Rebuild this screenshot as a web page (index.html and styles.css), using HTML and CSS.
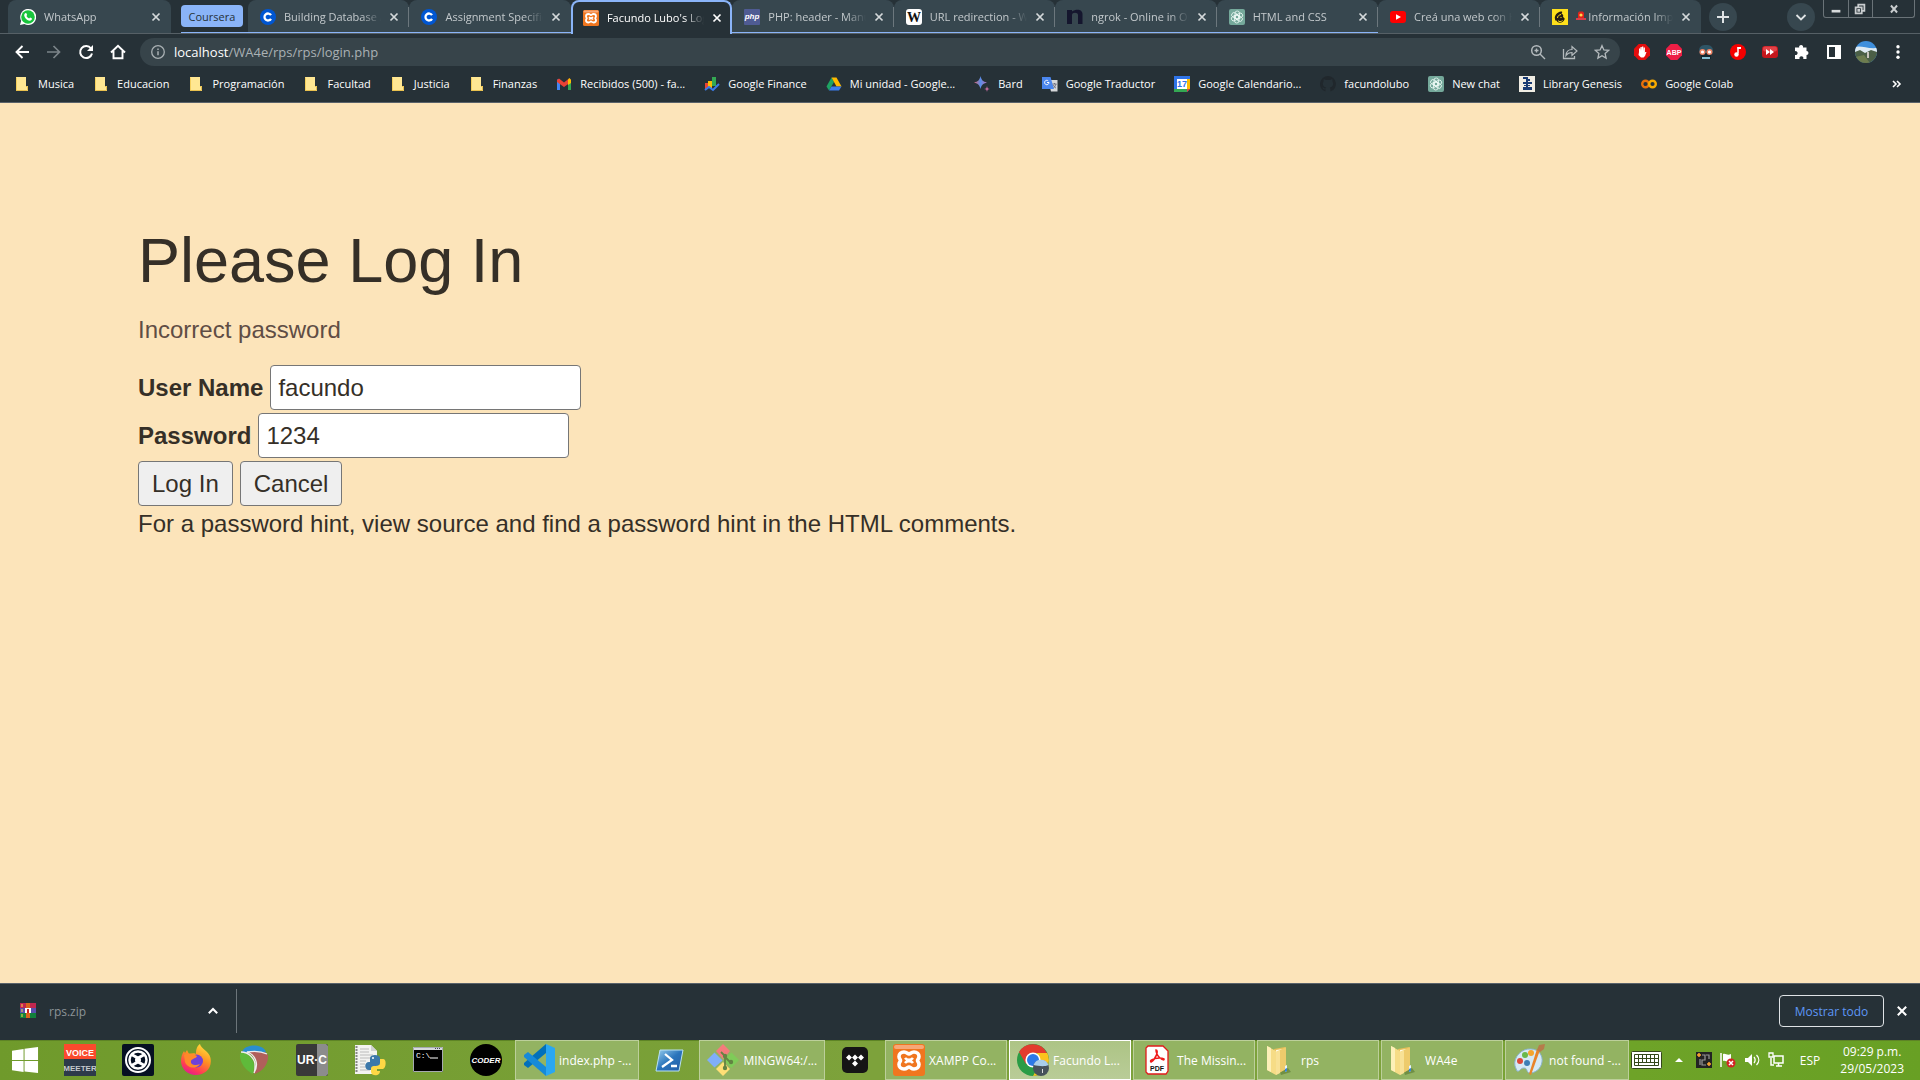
FILE: index.html
```html
<!DOCTYPE html>
<html lang="es">
<head>
<meta charset="utf-8">
<title>Facundo Lubo's Login Page</title>
<link rel="stylesheet" href="styles.css">
</head>
<body>
<svg class="defs" aria-hidden="true">
  <symbol id="x" viewBox="0 0 10 10"><path d="M1.5 1.5l7 7m0-7l-7 7" fill="none" stroke="currentColor" stroke-width="1.7"/></symbol>
  <symbol id="coursera" viewBox="0 0 16 16"><circle cx="8" cy="8" r="8" fill="#0056d2"/><path d="M11 6.2A3.5 3.5 0 1 0 11 9.8" fill="none" stroke="#fff" stroke-width="2.3"/></symbol>
  <symbol id="xampp" viewBox="0 0 32 32"><rect width="32" height="32" rx="3" fill="#f0761f"/><rect x="1" y="1" width="30" height="4" rx="2" fill="#f7a878"/><path d="M11 8c3 0 3.500 2 5 2s2-2 5-2c3 0 5 2 5 4.500s-1.500 2.500-1.500 4 1.500 1.500 1.500 4-2 4.500-5 4.500-3.500-2-5-2-2 2-5 2-5-2-5-4.500 1.500-2.500 1.500-4S6 15 6 12.500 8 8 11 8z" fill="none" stroke="#fff" stroke-width="3.600"/><path d="M12 14c2 2.500 6 2.500 8 0M12 19c2-2.500 6-2.500 8 0" fill="none" stroke="#fff" stroke-width="2.600"/></symbol>
  <symbol id="gpt" viewBox="0 0 16 16"><rect width="16" height="16" rx="2" fill="#75a99b"/><g fill="none" stroke="#eefaf6" stroke-width=".8"><rect x="6" y="2" width="4.500" height="8" rx="2.200"/><rect x="6" y="2" width="4.500" height="8" rx="2.200" transform="rotate(60 8 8)"/><rect x="6" y="2" width="4.500" height="8" rx="2.200" transform="rotate(120 8 8)"/><rect x="6" y="2" width="4.500" height="8" rx="2.200" transform="rotate(180 8 8)"/><rect x="6" y="2" width="4.500" height="8" rx="2.200" transform="rotate(240 8 8)"/><rect x="6" y="2" width="4.500" height="8" rx="2.200" transform="rotate(300 8 8)"/></g></symbol>
  <symbol id="folder" viewBox="0 0 16 16"><path d="M2 1h10v9h2v5H2z" fill="#ffe793"/><path d="M2.500 15V1.500" stroke="#f5cf5c"/><path d="M2 14.500h11.500v-4H12" fill="none" stroke="#e9c14e"/></symbol>
  <symbol id="bigfolder" viewBox="0 0 32 32"><path d="M16 31l10-3-3-4-8 4z" fill="#3b5a1a" opacity=".4"/><path d="M9 5l11-2v22l-9 3z" fill="#e7bf5a"/><path d="M11 6l7-1v21l-6 2z" fill="#fffbe5"/><path d="M2 2l9 5v24L2 26z" fill="#f6dc86"/><path d="M2 2l4 2v24l-4-2z" fill="#fdf0b8"/><path d="M11 8l10-5v22l-10 6z" fill="#eecb6c"/><path d="M11 8l4-2v23l-4 2z" fill="#f8e196"/><path d="M20 22l2-1v6l-2 1z" fill="#e8f4ff"/><path d="M20 25l2-1v3l-2 1z" fill="#3585d8"/></symbol>
</svg>

<header class="browser">
  <div class="strip">
    <div class="tab tab-first"><svg class="ico" viewBox="0 0 16 16"><path d="M0 16l1.200-4.200A8 8 0 1 1 4.400 15z" fill="#fff"/><circle cx="8" cy="8" r="6.800" fill="#18c43c"/><path d="M5 4.200l1.200-.2 1 2-.8 1c.6 1.200 1.500 2 2.700 2.600l1-1 1.900 1c0 1.600-1.200 2.200-2.300 2.100C6.500 11.200 4 8 4.200 5.700z" fill="#fff"/></svg><span class="title">WhatsApp</span><button class="close" aria-label="Cerrar"><svg><use href="#x"/></svg></button></div>
    <div class="chip-wrap"><button class="chip">Coursera</button></div>
    <div class="tabs">
      <div class="tab grouped sep"><svg class="ico"><use href="#coursera"/></svg><span class="title">Building Database Applications</span><button class="close" aria-label="Cerrar"><svg><use href="#x"/></svg></button></div>
      <div class="tab grouped"><svg class="ico"><use href="#coursera"/></svg><span class="title">Assignment Specification</span><button class="close" aria-label="Cerrar"><svg><use href="#x"/></svg></button></div>
      <div class="tab active"><svg class="ico"><use href="#xampp"/></svg><span class="title">Facundo Lubo's Login Page</span><button class="close" aria-label="Cerrar"><svg><use href="#x"/></svg></button></div>
      <div class="tab grouped sep"><svg class="ico" viewBox="0 0 16 16"><rect width="16" height="16" rx="1" fill="#4f5b93"/><text x="8" y="10" class="t-php">php</text></svg><span class="title">PHP: header - Manual</span><button class="close" aria-label="Cerrar"><svg><use href="#x"/></svg></button></div>
      <div class="tab grouped sep"><svg class="ico" viewBox="0 0 16 16"><rect width="16" height="16" rx="3" fill="#fff"/><text x="8" y="13" class="t-wiki">W</text></svg><span class="title">URL redirection - Wikipedia</span><button class="close" aria-label="Cerrar"><svg><use href="#x"/></svg></button></div>
      <div class="tab grouped sep"><svg class="ico" viewBox="0 0 16 16"><path d="M0 1h5v1.500C9-.5 15.500 0 15.500 5v10H11V6c0-3-6-3-6 0v9H0z" fill="#15162e"/></svg><span class="title">ngrok - Online in One Line</span><button class="close" aria-label="Cerrar"><svg><use href="#x"/></svg></button></div>
      <div class="tab grouped sep"><svg class="ico"><use href="#gpt"/></svg><span class="title">HTML and CSS</span><button class="close" aria-label="Cerrar"><svg><use href="#x"/></svg></button></div>
      <div class="tab sep"><svg class="ico" viewBox="0 0 16 16"><rect y="2" width="16" height="12" rx="3" fill="#f00"/><path d="M6 5.200l5 2.800-5 2.800z" fill="#fff"/></svg><span class="title">Creá una web con HTML</span><button class="close" aria-label="Cerrar"><svg><use href="#x"/></svg></button></div>
      <div class="tab"><svg class="ico" viewBox="0 0 16 16"><rect width="16" height="16" fill="#ffe01b"/><path d="M3 10c-1-3 2-7 6-7.500 2-.2 1 1.500.500 2.500 2 0 2 2 1.500 3 1 .5 2 1 1.500 2.500C11.500 14 6 15 4.500 11.500 3.500 12 3 11 3 10z" fill="#241c15"/><path d="M5.500 9c0-2 1.500-3 3.500-3.500M6 11.500c1 1.500 3 1.500 4.500 0M8.500 8.500h1" fill="none" stroke="#ffe01b"/></svg><span class="title"><svg class="siren" viewBox="0 0 10 10"><path d="M2 7V2l1-1.500h4L8 2v5z" fill="#e2231a"/><circle cx="5" cy="4" r="1.600" fill="#ffd84d"/><path d="M0 7h10v2H0z" fill="#d8404a"/></svg> Información Importante</span><button class="close" aria-label="Cerrar"><svg><use href="#x"/></svg></button></div>
    </div>
    <button class="round" aria-label="Nueva pestaña"><svg viewBox="0 0 28 28"><path d="M14 8v12M8 14h12" stroke="#dfe3e5" stroke-width="2"/></svg></button>
    <button class="round search" aria-label="Buscar pestañas"><svg viewBox="0 0 28 28"><path d="M9.500 12l4.500 4.500 4.500-4.500" fill="none" stroke="#dfe3e5" stroke-width="1.800"/></svg></button>
    <div class="win">
      <button aria-label="Minimizar"><svg viewBox="0 0 16 16"><rect x="3" y="9" width="10" height="3" fill="#d7dadb"/></svg></button>
      <button aria-label="Restaurar"><svg viewBox="0 0 16 16"><path d="M6 5V3h7v7h-2M3 6h7v7H3zM6 9h1v1H6z" fill="none" stroke="#c9cdcf" stroke-width="2"/></svg></button>
      <button class="win-x" aria-label="Cerrar ventana"><svg viewBox="0 0 16 16"><path d="M4.500 4l7 8m0-8l-7 8" stroke="#c9cdcf" stroke-width="2.200"/></svg></button>
    </div>
  </div>

  <nav class="toolbar">
    <button class="tool" aria-label="Atrás"><svg viewBox="0 0 16 16"><path d="M15 8H2.500M8.500 2L2.500 8l6 6" fill="none" stroke="#fff" stroke-width="1.900"/></svg></button>
    <button class="tool" aria-label="Adelante"><svg viewBox="0 0 16 16"><path d="M1 8h12.500M7.500 2l6 6-6 6" fill="none" stroke="#7b8489" stroke-width="1.700"/></svg></button>
    <button class="tool" aria-label="Recargar"><svg viewBox="0 0 16 16"><path d="M13 4.500A6 6 0 1 0 14 9.500" fill="none" stroke="#fff" stroke-width="2"/><path d="M15 1v6H9z" fill="#fff"/></svg></button>
    <button class="tool" aria-label="Inicio"><svg viewBox="0 0 16 16"><path d="M1 8.500L8 1.800l7 6.700M3.500 7v7.200h9V7" fill="none" stroke="#fff" stroke-width="1.900"/></svg></button>
    <div class="address">
      <svg class="ico" viewBox="0 0 16 16"><circle cx="8" cy="8" r="6.300" fill="none" stroke="#a9b0b3" stroke-width="1.300"/><path d="M8 7.200v4M8 4.400v1.500" stroke="#a9b0b3" stroke-width="1.500"/></svg>
      <span class="url"><b>localhost</b>/WA4e/rps/rps/login.php</span>
      <button class="tool" aria-label="Zoom"><svg viewBox="0 0 16 16"><circle cx="6.500" cy="6.500" r="4.800" fill="none" stroke="#b4babd" stroke-width="1.500"/><path d="M10 10l5 5M6.500 4.500v4M4.500 6.500h4" stroke="#b4babd" stroke-width="1.400"/></svg></button>
      <button class="tool" aria-label="Compartir"><svg viewBox="0 0 16 16"><path d="M1.500 5v9.500h11V12" fill="none" stroke="#b4babd" stroke-width="1.300"/><path d="M4 11.500c.3-4 2.500-6 6-6V2.500L15 7l-5 4.500V8.500c-2.500 0-4.500.8-6 3z" fill="none" stroke="#b4babd" stroke-width="1.200"/></svg></button>
      <button class="tool" aria-label="Favorito"><svg viewBox="0 0 16 16"><path d="M8 1.700l1.900 4.300 4.700.4-3.500 3.100 1 4.600L8 11.700l-4.100 2.400 1-4.600L1.400 6.400l4.700-.4z" fill="none" stroke="#b4babd" stroke-width="1.300"/></svg></button>
    </div>
    <div class="exts">
      <button class="tool" aria-label="AdBlock"><svg viewBox="0 0 16 16"><path d="M4.700 0h6.600L16 4.700v6.600L11.300 16H4.700L0 11.300V4.700z" fill="#e40d0d"/><path d="M5 8V4.500h1.200V7l.3-4h1.300v4l.3-4.500h1.200V7l.4-3.500h1.200V9l.3-1h1.300l-1.500 4-1.500 1.500H7L4.500 11z" fill="#fff"/></svg></button>
      <button class="tool" aria-label="Adblock Plus"><svg viewBox="0 0 16 16"><path d="M4.700 0h6.600L16 4.700v6.600L11.300 16H4.700L0 11.300V4.700z" fill="#ed1e45"/><text x="8" y="10.600" class="t-abp">ABP</text></svg></button>
      <button class="tool" aria-label="Extensión"><svg viewBox="0 0 16 16"><path d="M1 7C1 2 4 1 8 1s7 1 7 6l-1 3H2z" fill="#2e5566"/><path d="M3 9h10v6H3z" fill="#13262e"/><path d="M4 13h8v2H4z" fill="#86bdd0"/><circle cx="4.500" cy="8" r="3" fill="#ef8262"/><circle cx="11.500" cy="8" r="3" fill="#ef8262"/><circle cx="4.500" cy="8" r="1.600" fill="#fff"/><circle cx="11.500" cy="8" r="1.600" fill="#fff"/></svg></button>
      <button class="tool" aria-label="Música"><svg viewBox="0 0 16 16"><circle cx="8" cy="8" r="8" fill="#f50000"/><path d="M8 3v6.500" stroke="#fff" stroke-width="1.500"/><path d="M7.500 3H11v2H7.500z" fill="#fff"/><circle cx="6.500" cy="10.500" r="2.200" fill="#fff"/></svg></button>
      <button class="tool" aria-label="Velocidad"><svg viewBox="0 0 16 16"><rect y="2" width="16" height="12" rx="3" fill="#c4161c"/><rect x="1" y="2.500" width="14" height="5" rx="2" fill="#e24247"/><path d="M4 5l4 3-4 3zM8 5l4 3-4 3z" fill="#fff"/></svg></button>
      <button class="tool" aria-label="Extensiones"><svg viewBox="0 0 16 16"><path d="M2 3.500h3.200a2 2 0 1 1 3.800 0h3.500V7a2 2 0 1 1 0 4v4H9.200a2 2 0 1 0-3.600 0H1v-4a2 2 0 1 0 0-3.800V3.500z" fill="#fff"/></svg></button>
      <button class="tool" aria-label="Panel lateral"><svg viewBox="0 0 16 16"><path d="M1 1h14v14H1zM3 3v10h6V3z" fill="#fff" fill-rule="evenodd"/></svg></button>
      <button class="tool" aria-label="Perfil"><svg class="avatar" viewBox="0 0 22 22"><defs><clipPath id="av"><circle cx="11" cy="11" r="11"/></clipPath></defs><g clip-path="url(#av)"><path d="M0 0h22v22H0z" fill="#3f8fdc"/><path d="M0 6c6-2 12 2 22 1v5H0z" fill="#dfeaf2"/><path d="M0 11l5-2 5 3 6-3 6 2v11H0z" fill="#4b5f47"/><path d="M0 16l9-2 6 8H0z" fill="#6d7c4f"/><path d="M12 11h2v6h-2z" fill="#c8c4bd"/></g></svg></button>
      <button class="tool" aria-label="Menú"><svg viewBox="0 0 16 16"><circle cx="8" cy="2.800" r="1.700" fill="#fff"/><circle cx="8" cy="8" r="1.700" fill="#fff"/><circle cx="8" cy="13.200" r="1.700" fill="#fff"/></svg></button>
    </div>
  </nav>

  <nav class="bookmarks">
    <a href="#"><svg class="ico"><use href="#folder"/></svg>Musica</a>
    <a href="#"><svg class="ico"><use href="#folder"/></svg>Educacion</a>
    <a href="#"><svg class="ico"><use href="#folder"/></svg>Programación</a>
    <a href="#"><svg class="ico"><use href="#folder"/></svg>Facultad</a>
    <a href="#"><svg class="ico"><use href="#folder"/></svg>Justicia</a>
    <a href="#"><svg class="ico"><use href="#folder"/></svg>Finanzas</a>
    <a href="#"><svg class="ico" viewBox="0 0 16 16"><path d="M1 3.500h3V14H1z" fill="#4285f4"/><path d="M12 3.500h3V14h-3z" fill="#34a853"/><path d="M1 4l2-1.500 5 4 5-4L15 4v2L8 11 1 6z" fill="#ea4335"/><path d="M12 3.500L13.500 2 15 4v3l-3 2z" fill="#fbbc04"/></svg>Recibidos (500) - fa...</a>
    <a href="#"><svg class="ico" viewBox="0 0 16 16"><path d="M1 7h3v6H1z" fill="#ea4335"/><path d="M4 5h4v7H4z" fill="#fbbc04"/><path d="M8 1h4v9H8z" fill="#34a853"/><path d="M1 14l4-3 4 3 6-6" fill="none" stroke="#3b7bea" stroke-width="2"/></svg>Google Finance</a>
    <a href="#"><svg class="ico" viewBox="0 0 16 16"><path d="M5.500 1.500L8 6l-5 8.500L.5 10.500z" fill="#1ea362"/><path d="M5.500 1.500h5l5 9h-5z" fill="#ffba00"/><path d="M3 14.500l2.500-4h10l-2.500 4z" fill="#3b7ded"/></svg>Mi unidad - Google...</a>
    <a href="#"><svg class="ico" viewBox="0 0 16 16"><defs><linearGradient id="bard"><stop stop-color="#d96570"/><stop offset=".5" stop-color="#5b8ee8"/><stop offset="1" stop-color="#b46fb8"/></linearGradient></defs><path d="M6.500 0c1 4 2.200 5.500 6.500 6.500-4.300 1-5.500 2.500-6.500 6.500C5.500 9 4.300 7.500 0 6.500 4.300 5.500 5.500 4 6.500 0z" fill="url(#bard)"/><path d="M13 10c.3 2 1 2.700 3 3-2 .3-2.700 1-3 3-.3-2-1-2.700-3-3 2-.3 2.700-1 3-3z" fill="#c06a9c"/></svg>Bard</a>
    <a href="#"><svg class="ico" viewBox="0 0 16 16"><path d="M6 4h9.500v11.500H9z" fill="#d5d7da"/><path d="M0 1h8.500L12 13H0z" fill="#4a86ee"/><path d="M7 6.500H5m2 0a2.200 2.200 0 1 1-.8-1.700" fill="none" stroke="#fff" stroke-width="1"/><path d="M10.500 8h4m-2-1v1m1.500 0c-.5 2-1.500 3-2.500 4m0-3c.5 1.500 1.500 2.500 2.500 3" fill="none" stroke="#667" stroke-width=".9"/></svg>Google Traductor</a>
    <a href="#"><svg class="ico" viewBox="0 0 16 16"><path d="M0 0h16v13l-3 3H0z" fill="#2f74e8"/><path d="M13 3h3v10h-3z" fill="#fbbc04"/><path d="M0 13h13v3H0z" fill="#34a853"/><path d="M13 13h3l-3 3z" fill="#ea4335"/><path d="M3 3h10v10H3z" fill="#fff"/><text x="8" y="11" class="t-cal">17</text></svg>Google Calendario...</a>
    <a href="#"><svg class="ico" viewBox="0 0 16 16"><path d="M8 0a8 8 0 0 0-2.500 15.600v-2.300C3 13.800 2.700 12 2.200 11.500c1.700-.5 2 1.500 3.400 1l.6-1C4 11 2.800 10 2.800 7.500L3.500 5.400l.2-2.300L6 4h4l2.300-.9.200 2.300.7 2.100c0 2.500-1.200 3.500-3.400 4l.6 1.500v2.600A8 8 0 0 0 8 0z" fill="#20272c"/></svg>facundolubo</a>
    <a href="#"><svg class="ico"><use href="#gpt"/></svg>New chat</a>
    <a href="#"><svg class="ico" viewBox="0 0 16 16"><path d="M0 0h16v16H0z" fill="#f0ede4"/><path d="M4 1h5v2H4zM7 3h4v2H7zM4 6h9v2H4zM5 9h6v1H5zM4 11h9v3H4zM7 1h2v13H7z" fill="#183a73"/></svg>Library Genesis</a>
    <a href="#"><svg class="ico" viewBox="0 0 16 16"><g fill="none" stroke-width="2.400"><circle cx="4.500" cy="8" r="3.300" stroke="#e8710a"/><circle cx="11.500" cy="8" r="3.300" stroke="#f9ab00"/></g></svg>Google Colab</a>
    <button class="more" aria-label="Más marcadores"><svg viewBox="0 0 10 8"><path d="M1 1l3 3-3 3m4-6l3 3-3 3" fill="none" stroke="#fff" stroke-width="1.600"/></svg></button>
  </nav>
</header>

<main class="page">
  <h1>Please Log In</h1>
  <p class="error">Incorrect password</p>
  <form onsubmit="return false">
    <div class="row"><label for="nam">User Name</label><input type="text" id="nam" value="facundo"></div>
    <div class="row"><label for="pass">Password</label><input type="text" id="pass" value="1234"></div>
    <div class="row"><button type="submit">Log In</button><button type="button">Cancel</button></div>
  </form>
  <p>For a password hint, view source and find a password hint in the HTML comments.</p>
</main>

<aside class="downloads">
  <div class="file">
    <svg class="ico" viewBox="0 0 16 16"><path d="M0 0h16v5H0z" fill="#c2274f"/><path d="M0 5h16v5H0z" fill="#5a4fae"/><path d="M0 10h16v5H0z" fill="#12813c"/><path d="M6 0h4v15H6z" fill="#d9641d"/><path d="M5 5h6v5H5z" fill="#fff"/><path d="M7 6h2v4H7z" fill="#c22"/><path d="M2 1v3M2 6v3M2 11v3" stroke="#ffd94a"/></svg>
    <span>rps.zip</span>
    <button aria-label="Opciones"><svg viewBox="0 0 10 8"><path d="M.8 6.200L5 2l4.200 4.200" fill="none" stroke="#fff" stroke-width="2"/></svg></button>
  </div>
  <button class="show-all">Mostrar todo</button>
  <button class="bar-close" aria-label="Cerrar"><svg><use href="#x"/></svg></button>
</aside>

<footer class="taskbar">
  <button class="start" aria-label="Inicio"><svg viewBox="0 0 28 28"><path d="M0 4l12-2v11.500H0zM13 1.800L27 0v13.500H13zM0 14.500h12V26L0 24zM13 14.500h14V27l-14-1.500z" fill="#fff"/></svg></button>
  <button class="app" aria-label="Voicemeeter"><svg viewBox="0 0 32 32"><path d="M0 0h32v15H0z" fill="#fb4a2d"/><path d="M0 15h32v17H0z" fill="#2d3a4a"/><text x="16" y="12" class="t-voice">VOICE</text><text x="16" y="27" class="t-voice dim">MEETER</text></svg></button>
  <button class="app" aria-label="Traktor"><svg viewBox="0 0 32 32"><rect width="32" height="32" rx="2" fill="#061022"/><circle cx="16" cy="16" r="12" fill="none" stroke="#fff" stroke-width="2"/><circle cx="16" cy="16" r="8.500" fill="none" stroke="#fff" stroke-width="2.500"/><path d="M9.500 10.500L16 14l6.500-3.500M9.500 21.500L16 18l6.500 3.500" fill="none" stroke="#fff" stroke-width="3"/><circle cx="16" cy="16" r="3" fill="#fff"/></svg></button>
  <button class="app" aria-label="Firefox"><svg viewBox="0 0 32 32"><defs><linearGradient id="ff" x1=".8" y1="0" x2=".3" y2="1"><stop stop-color="#ffe33e"/><stop offset=".45" stop-color="#ff9022"/><stop offset=".8" stop-color="#ff3a55"/><stop offset="1" stop-color="#e11a93"/></linearGradient></defs><path d="M20 0c1 5 9 7 10.500 14C32.500 24 25 31 16 31 7 31 1 24 1 17c0-4 1-7 3-10l1 2 2-3 2 4c3-1 6-1 7 0 0-5 1-8 4-10z" fill="url(#ff)"/><circle cx="16.500" cy="17" r="6.500" fill="#7141d9"/><path d="M4 11c5-3 9-1 13 1-1 3-5 2-6 5-1 4 5 5 9 3-4 6-13 4-15-2z" fill="#ff8a2a"/></svg></button>
  <button class="app" aria-label="REAPER"><svg viewBox="0 0 32 32"><path d="M5 6C9 0 23 0 27 6l2 5C25 7 14 8 9 8L4 8z" fill="#2a8ed0"/><path d="M2 10l2-2c7 2 12 8 12 14l-1 8C8 27 1 18 2 10z" fill="#5fba3a"/><path d="M10 8h17l3 3c1 8-5 17-14 19 5-11 0-18-6-22z" fill="#b0605b"/><path d="M3 8c8 0 14 7 14 13 0 3 0 6-1 8 6-10 0-19-7-21 6-1 14-1 20 2" fill="none" stroke="#eee" stroke-width="1.300"/></svg></button>
  <button class="app" aria-label="UR-C"><svg viewBox="0 0 32 32"><rect width="32" height="32" rx="2" fill="#393939"/><path d="M21 0h9l2 2v28l-2 2h-9z" fill="#8c8c8c"/><text x="16" y="20" class="t-urc">UR·C</text></svg></button>
  <button class="app" aria-label="Python"><svg viewBox="0 0 32 32"><path d="M1 1h16l6 6v23H1z" fill="#f3f3f1"/><path d="M2.500 2v27" stroke="#888" stroke-width="2" stroke-dasharray="2 1"/><path d="M6 5h9M6 8h9M6 11h13M6 14h13M6 17h6M6 20h5M6 23h5M6 26h10" stroke="#bbb"/><path d="M17 1v6h6z" fill="#d2d2d2"/><path d="M16 18v-4c0-4 10-4 10 0v6c0 3-7 1-8 4v2h-3c-5 0-5-8 0-8z" fill="#3c78aa"/><path d="M26 15h3c4 0 3 9 0 10h-6v2h3c0 6-9 5-9 1v-4c1-4 9 0 9-5z" fill="#ffd845"/><circle cx="19" cy="14" r="1" fill="#fff"/></svg></button>
  <button class="app" aria-label="Símbolo del sistema"><svg viewBox="0 0 32 32"><path d="M1 3h30v25H1z" fill="#000"/><path d="M1 3h30v3H1z" fill="#d7dadd"/><path d="M1.500 3.500h29v24h-29z" fill="none" stroke="#a5aab0"/><path d="M23 4.500h6" stroke="#445" stroke-dasharray="1 1"/><path d="M18 14h8" stroke="#fff"/><text x="4" y="14" class="t-cmd">C:\</text></svg></button>
  <button class="app" aria-label="Coder"><svg viewBox="0 0 32 32"><circle cx="16" cy="16" r="16" fill="#000"/><text x="16" y="19" class="t-coder">CODER</text></svg></button>
  <button class="task"><svg viewBox="0 0 32 32"><path d="M23 0l9 4v24l-9 4z" fill="#2aa7f2"/><path d="M23 0v9L5 24l-4-3v-2z" fill="#0070bb"/><path d="M1 11l4-3 18 15v9L1 13z" fill="#168ad8"/></svg><span>index.php -...</span></button>
  <button class="app wide" aria-label="PowerShell"><svg viewBox="0 0 32 32"><defs><linearGradient id="ps" x1="0" y1="0" x2="1" y2="1"><stop stop-color="#9ad0ef"/><stop offset=".5" stop-color="#2a74bb"/><stop offset="1" stop-color="#245ba4"/></linearGradient></defs><path d="M7 6h23l-4 21H3z" fill="url(#ps)" stroke="#b9e1f2"/><path d="M12 10l7 6-10 7M18 22h6" fill="none" stroke="#fff" stroke-width="2.300"/></svg></button>
  <button class="task"><svg viewBox="0 0 32 32"><path d="M16 0l7 7-7 8-7-8z" fill="#f37c7c"/><path d="M7.500 8.500l8 8-8 7L0 16z" fill="#80aefa"/><path d="M24.500 8.500L32 16l-7.500 8-8-8z" fill="#7fcb58"/><path d="M16 18l7 7-7 7-7-7z" fill="#ffdf76"/><path d="M14 8l4 4v14M18 13l5 5" fill="none" stroke="#638443" stroke-width="1.800"/><circle cx="18" cy="12" r="2.200" fill="#638443"/><circle cx="24" cy="18" r="2.200" fill="#638443"/><circle cx="18" cy="24" r="2.200" fill="#638443"/></svg><span>MINGW64:/...</span></button>
  <button class="app wide" aria-label="TIDAL"><svg viewBox="0 0 32 32"><rect x="3" y="3" width="26" height="26" rx="5" fill="#151515"/><path d="M10 10.500l3 3-3 3-3-3zM16 10.500l3 3-3 3-3-3zM22 10.500l3 3-3 3-3-3zM16 16.500l3 3-3 3-3-3z" fill="#fff"/></svg></button>
  <div class="tasks">
    <button class="task"><svg><use href="#xampp"/></svg><span>XAMPP Co...</span></button>
    <button class="task current"><svg viewBox="0 0 32 32"><circle cx="16" cy="16" r="16" fill="#2a9c46"/><path d="M2 8A16 16 0 0 1 30 9H16l-7 11z" fill="#e33b2e"/><path d="M30.300 9A16 16 0 0 1 16 32l7-12-3-11z" fill="#fcc31e"/><circle cx="16" cy="16" r="7.600" fill="#fff"/><circle cx="16" cy="16" r="6" fill="#2c79e8"/><circle cx="24" cy="24" r="8" fill="#46515a"/><path d="M16.500 21a8 8 0 0 1 15 0c-4 2-10 1-15 0z" fill="#a9cdea"/><path d="M25 25h1v4h-1z" fill="#ddd"/></svg><span>Facundo L...</span></button>
    <button class="task"><svg viewBox="0 0 32 32"><path d="M7 2h15l5 5v20l-2 3H7l-2-2V4z" fill="#fff" stroke="#e11b1b" stroke-width="1.300"/><path d="M15 6c3 0 0 9-5 12-3-3 9-5 13-3 1 3-8-2-8-9z" fill="none" stroke="#ef1a1a" stroke-width="1.500"/><text x="16" y="27" class="t-pdf">PDF</text></svg><span>The Missin...</span></button>
    <button class="task"><svg><use href="#bigfolder"/></svg><span>rps</span></button>
    <button class="task"><svg><use href="#bigfolder"/></svg><span>WA4e</span></button>
    <button class="task"><svg viewBox="0 0 32 32"><path d="M2 22C0 13 9 4 18 5c8 0 12 7 11 13-1 7-7 11-12 11-4 0-2-5-6-5s-4 4-7 3z" fill="#d5eaf6" stroke="#8bb4cf"/><circle cx="12" cy="11" r="3" fill="#69b94a"/><circle cx="18" cy="9" r="3" fill="#f5a52c"/><circle cx="7" cy="17" r="3" fill="#dc4a3a"/><circle cx="14" cy="19" r="3" fill="#3c7eb5"/><path d="M27 6l-9 25-2-1 8-25z" fill="#e8842a"/><path d="M24 6l2-5 6-1-1 5-4 3z" fill="#b67c4b"/></svg><span>not found -...</span></button>
  </div>
  <div class="tray">
    <svg class="kbd" viewBox="0 0 31 18"><rect x=".5" y=".5" width="30" height="17" rx="1" fill="#fff" stroke="#33471a"/><g fill="none" stroke="#33471a"><path d="M3.500 3.500h24v11h-24zM3.500 7.500h24M3.500 11.500h24M7.500 3.500v11M11.500 3.500v8M15.500 3.500v8M19.500 3.500v8M23.500 3.500v11"/></g></svg>
    <svg class="up" viewBox="0 0 10 6"><path d="M1 5l4-4 4 4z" fill="#fff"/></svg>
    <svg class="ico" viewBox="0 0 16 16"><path d="M0 0h16v16H0z" fill="#232323"/><path d="M6 3h3v5H6v5h4M10 3h3v4M4 7v6" fill="none" stroke="#999" stroke-width="1.200"/><path d="M1 3h4M3 1v4M11 12h4M13 10v4" stroke="#ffa733" stroke-width="1.500"/></svg>
    <svg class="ico" viewBox="0 0 16 16"><path d="M1 1v14" stroke="#fff" stroke-width="1.500"/><path d="M3 2c3-1 4 2 8 0v7c-4 2-5-1-8 0z" fill="#fff"/><circle cx="11" cy="11" r="4.500" fill="#d32323"/><path d="M9 9l4 4m0-4l-4 4" stroke="#fff" stroke-width="1.500"/></svg>
    <svg class="ico" viewBox="0 0 16 16"><path d="M1 6h3l4-4v12l-4-4H1z" fill="#fff"/><path d="M10 5c1.500 2 1.500 4 0 6M12.500 3c3 3 3 7 0 10" fill="none" stroke="#fff" stroke-width="1.300"/></svg>
    <svg class="ico" viewBox="0 0 16 16"><path d="M6 4h9v7H6zM8 14h6M10.500 11v3M3 6v7h3" fill="none" stroke="#fff" stroke-width="1.500"/><path d="M1 1h4v4H1z" fill="none" stroke="#fff" stroke-width="1.300"/></svg>
    <span class="lang">ESP</span>
    <div class="clock"><span>09:29 p.m.</span><span>29/05/2023</span></div>
  </div>
</footer>
</body>
</html>
```
FILE: styles.css
```css
* { box-sizing: border-box; }

body {
  margin: 0;
  min-height: 100vh;
  display: flex;
  flex-direction: column;
  background: #fce4ba;
  font-family: "Open Sans", "Noto Sans", sans-serif;
  font-size: 11px;
  color: #fff;
}

button {
  margin: 0;
  padding: 0;
  border: 0;
  background: none;
  color: inherit;
  font: inherit;
}

svg { display: block; flex: none; }
.defs { position: absolute; width: 0; height: 0; }
.ico { width: 16px; height: 16px; }

/* Browser frame */
.browser {
  background: #263137;
  border-bottom: 1px solid #59626a;
}

.strip {
  display: flex;
  height: 34px;
  padding-left: 8px;
  border-bottom: 1px solid #566066;
}

.tabs {
  display: flex;
  flex: 1;
  min-width: 0;
}

.tab {
  position: relative;
  display: flex;
  flex: 1 1 0;
  align-items: center;
  min-width: 0;
  height: 33px;
  padding: 0 10px 0 12px;
  background: #37474f;
  border-radius: 8px 8px 0 0;
  color: #c3c9cc;
}

.tab-first { flex: 0 0 163px; }

.title {
  flex: 1;
  min-width: 0;
  margin: 0 8px;
  overflow: hidden;
  white-space: nowrap;
  line-height: 16px;
  -webkit-mask-image: linear-gradient(to right, #000 80%, transparent);
  mask-image: linear-gradient(to right, #000 80%, transparent);
}

.siren { display: inline-block; width: 10px; height: 10px; }

.close svg { width: 10px; height: 10px; color: #d5d9db; }

.grouped { border-bottom: 1px solid #8ab4f8; padding-top: 1px; }

.sep::after {
  content: "";
  position: absolute;
  right: 0;
  top: 7px;
  height: 20px;
  border-right: 1px solid #6c777d;
}

.active {
  height: 34px;
  padding: 0 8px 0 10px;
  background: #263137;
  border: 2px solid #8ab4f8;
  border-bottom: 0;
  color: #fff;
}

.active .close svg { color: #fff; }

.chip-wrap {
  display: flex;
  align-items: center;
  height: 33px;
  margin-left: 10px;
  padding-right: 5px;
  border-bottom: 1px solid #8ab4f8;
}

.chip {
  width: 62px;
  height: 22px;
  border-radius: 4px;
  background: #8ab4f8;
  color: #263137;
}

.round {
  width: 28px;
  height: 28px;
  margin: 3px 0 0 8px;
  border-radius: 50%;
  background: #37474f;
}

.search { margin-left: 50px; }

.win {
  display: flex;
  width: 92px;
  height: 18px;
  margin: 0 5px 0 8px;
  border: 1px solid #6a7378;
  border-top: 0;
  border-radius: 0 0 3px 3px;
}

.win button {
  display: flex;
  flex: 1;
  align-items: center;
  justify-content: center;
  border-right: 1px solid #6a7378;
}

.win .win-x { flex: 0 0 41px; border-right: 0; }
.win svg { width: 14px; height: 14px; }

.toolbar {
  display: flex;
  align-items: center;
  height: 36px;
  padding: 0 6px;
}

.tool {
  display: flex;
  flex: 0 0 32px;
  align-items: center;
  justify-content: center;
  height: 28px;
}

.tool svg { width: 16px; height: 16px; }
.tool .avatar { width: 22px; height: 22px; }

.address {
  display: flex;
  flex: 1;
  align-items: center;
  height: 28px;
  margin: 0 6px;
  padding: 0 2px 0 10px;
  border-radius: 14px;
  background: #37444a;
}

.url {
  flex: 1;
  padding-left: 8px;
  font-size: 13px;
  line-height: 18px;
  color: #aab1b4;
}

.url b { font-weight: 400; color: #fff; }

.exts { display: flex; }

.bookmarks {
  display: flex;
  align-items: center;
  gap: 19px;
  height: 32px;
  padding: 0 18px 4px 14px;
}

.bookmarks a {
  display: flex;
  align-items: center;
  gap: 8px;
  color: #fff;
  line-height: 16px;
  text-decoration: none;
  white-space: nowrap;
}

.more { margin-left: auto; }
.more svg { width: 10px; height: 8px; }

/* Lettering inside icons */
.t-php, .t-wiki, .t-abp, .t-cal, .t-voice, .t-urc, .t-coder, .t-pdf {
  text-anchor: middle;
  fill: #fff;
  font-family: "Liberation Sans", sans-serif;
  font-weight: 700;
}

.t-php { font-size: 8px; font-style: italic; }
.t-wiki { font-family: "Liberation Serif", serif; font-size: 14px; fill: #111; }
.t-abp { font-size: 7px; }
.t-cal { font-size: 9px; fill: #2f74e8; }
.t-voice { font-size: 9px; }
.t-voice.dim { font-size: 8px; fill: #c5c9cd; }
.t-urc { font-size: 12px; }
.t-coder { font-size: 8px; font-style: italic; }
.t-pdf { font-size: 7px; fill: #111; }
.t-cmd { fill: #fff; font-family: "Liberation Mono", monospace; font-size: 8px; }

/* Login page */
.page {
  flex: 1;
  padding: 122px 138px 0;
  color: #352f27;
  font-family: "Liberation Sans", Arial, sans-serif;
  font-size: 24px;
  line-height: 35px;
}

.page h1 {
  margin: 0 0 17px;
  font-size: 63px;
  font-weight: 400;
  line-height: 70px;
}

.page p { margin: 0; }
.page .error { margin-bottom: 18px; color: #5f4d45; }

.row {
  display: flex;
  align-items: center;
  gap: 7px;
  margin-bottom: 3px;
}

.row label { font-weight: 700; }

.row input,
.row button {
  height: 45px;
  border: 1px solid #767676;
  border-radius: 4px;
  color: #352f27;
  font: inherit;
}

.row input {
  width: 311px;
  padding: 0 7px;
  background: #fff;
}

.row button {
  padding: 0 13px;
  background: #efefef;
}

.page form { margin-bottom: -3px; }

/* Downloads bar */
.downloads {
  display: flex;
  align-items: center;
  height: 57px;
  padding: 0 12px 2px 0;
  border-top: 1px solid #59626a;
  background: #263137;
}

.file {
  display: flex;
  align-items: center;
  width: 237px;
  height: 44px;
  padding: 0 18px 0 20px;
  border-right: 1px solid #6c757a;
  color: #8d9498;
  font-size: 12px;
}

.file span { flex: 1; padding-left: 13px; }
.file button svg { width: 10px; height: 8px; }

.show-all {
  width: 105px;
  height: 32px;
  margin-left: auto;
  border: 1px solid #dfe3e6;
  border-radius: 4px;
  color: #5e97f6;
  font-size: 12px;
}

.bar-close { margin-left: 12px; }
.bar-close svg { width: 12px; height: 12px; }

/* Taskbar */
.taskbar {
  display: flex;
  height: 40px;
  box-shadow: inset 0 1px #5e8425;
  background: linear-gradient(to right, #6f9a2b, #7da23b 45%, #7da23b 75%, #6ea328 85%, #68a024);
  font-size: 12px;
}

.start { flex: 0 0 51px; padding-left: 12px; }
.start svg { width: 27px; height: 27px; }

.app {
  display: flex;
  flex: 0 0 58px;
  align-items: center;
  justify-content: center;
}

.app.wide { flex-basis: 60px; }
.app svg, .task svg { width: 32px; height: 32px; }

.task {
  display: flex;
  flex: 0 0 122px;
  align-items: center;
  gap: 4px;
  padding: 0 7px;
  border: 1px solid #bccf9a;
  background: #93b362;
  white-space: nowrap;
}

.tasks { display: flex; gap: 2px; }

.current {
  border-color: #fff;
  background: linear-gradient(#adc485, #b9cc98);
}

.tray {
  display: flex;
  flex: 1;
  align-items: center;
  justify-content: flex-end;
  gap: 8px;
  padding-right: 16px;
}

.kbd { width: 31px; height: 18px; }
.up { width: 10px; height: 6px; margin: 0 4px; }
.lang { padding-left: 8px; }

.clock {
  display: flex;
  flex-direction: column;
  align-items: center;
  padding-left: 12px;
  line-height: 17px;
}
```
